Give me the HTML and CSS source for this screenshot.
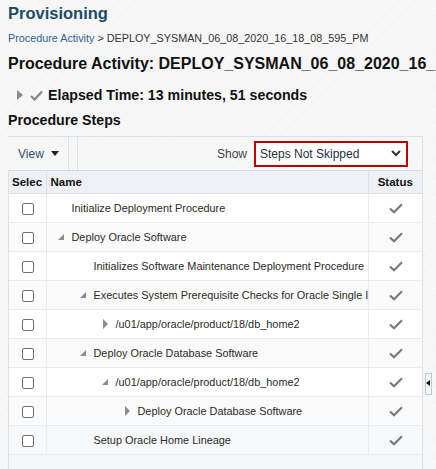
FILE: index.html
```html
<!DOCTYPE html>
<html>
<head>
<meta charset="utf-8">
<link rel="stylesheet" href="styles.css">
</head>
<body>
<div class="page">
  <h1 class="title">Provisioning</h1>
  <div class="crumbs"><a class="crumb-link">Procedure Activity</a> &gt; DEPLOY_SYSMAN_06_08_2020_16_18_08_595_PM</div>
  <h2 class="activity">Procedure Activity: DEPLOY_SYSMAN_06_08_2020_16_18_08_595_PM</h2>
  <div class="elapsed">
    <span class="tri-right big"></span>
    <svg class="elapsed-check" width="13" height="11" viewBox="0 0 13 11"><path d="M1 6 L4.5 9.5 L12 1.5" fill="none" stroke="#8a8a8a" stroke-width="2.4"/></svg>
    <span>Elapsed Time: 13 minutes, 51 seconds</span>
  </div>
  <h3 class="steps-title">Procedure Steps</h3>
  <div class="panel">
    <div class="toolbar">
      <div class="view">View <span class="caret"></span></div>
      <div class="sep"></div>
      <div class="sep second"></div>
      <div class="show">
        <span class="show-label">Show</span>
        <div class="select">Steps Not Skipped
          <svg class="chev" width="10" height="7" viewBox="0 0 10 7"><path d="M1 1 L5 5 L9 1" fill="none" stroke="#333" stroke-width="2"/></svg>
        </div>
      </div>
    </div>
    <div class="grid">
      <table class="steps">
        <colgroup><col class="c-sel"><col class="c-name"><col class="c-status"></colgroup>
        <thead>
          <tr><th class="th-sel">Selec</th><th class="th-name">Name</th><th class="th-status">Status</th></tr>
        </thead>
        <tbody>
          <tr><td class="sel"><span class="cb"></span></td><td class="name"><div class="nm l0"><span class="tw"></span>Initialize Deployment Procedure</div></td><td class="st"><svg class="ck" width="14" height="11" viewBox="0 0 14 11"><path d="M1 5.5 L5 9.3 L13 1.3" fill="none" stroke="#7a7a7a" stroke-width="2.2"/></svg></td></tr>
          <tr class="alt"><td class="sel"><span class="cb"></span></td><td class="name"><div class="nm l0"><span class="tw exp"></span>Deploy Oracle Software</div></td><td class="st"><svg class="ck" width="14" height="11" viewBox="0 0 14 11"><path d="M1 5.5 L5 9.3 L13 1.3" fill="none" stroke="#7a7a7a" stroke-width="2.2"/></svg></td></tr>
          <tr><td class="sel"><span class="cb"></span></td><td class="name"><div class="nm l1"><span class="tw"></span>Initializes Software Maintenance Deployment Procedure</div></td><td class="st"><svg class="ck" width="14" height="11" viewBox="0 0 14 11"><path d="M1 5.5 L5 9.3 L13 1.3" fill="none" stroke="#7a7a7a" stroke-width="2.2"/></svg></td></tr>
          <tr class="alt"><td class="sel"><span class="cb"></span></td><td class="name"><div class="nm l1"><span class="tw exp"></span>Executes System Prerequisite Checks for Oracle Single Instance Database</div></td><td class="st"><svg class="ck" width="14" height="11" viewBox="0 0 14 11"><path d="M1 5.5 L5 9.3 L13 1.3" fill="none" stroke="#7a7a7a" stroke-width="2.2"/></svg></td></tr>
          <tr><td class="sel"><span class="cb"></span></td><td class="name"><div class="nm l2"><span class="tw col"></span>/u01/app/oracle/product/18/db_home2</div></td><td class="st"><svg class="ck" width="14" height="11" viewBox="0 0 14 11"><path d="M1 5.5 L5 9.3 L13 1.3" fill="none" stroke="#7a7a7a" stroke-width="2.2"/></svg></td></tr>
          <tr class="alt"><td class="sel"><span class="cb"></span></td><td class="name"><div class="nm l1"><span class="tw exp"></span>Deploy Oracle Database Software</div></td><td class="st"><svg class="ck" width="14" height="11" viewBox="0 0 14 11"><path d="M1 5.5 L5 9.3 L13 1.3" fill="none" stroke="#7a7a7a" stroke-width="2.2"/></svg></td></tr>
          <tr><td class="sel"><span class="cb"></span></td><td class="name"><div class="nm l2"><span class="tw exp"></span>/u01/app/oracle/product/18/db_home2</div></td><td class="st"><svg class="ck" width="14" height="11" viewBox="0 0 14 11"><path d="M1 5.5 L5 9.3 L13 1.3" fill="none" stroke="#7a7a7a" stroke-width="2.2"/></svg></td></tr>
          <tr class="alt"><td class="sel"><span class="cb"></span></td><td class="name"><div class="nm l3"><span class="tw col"></span>Deploy Oracle Database Software</div></td><td class="st"><svg class="ck" width="14" height="11" viewBox="0 0 14 11"><path d="M1 5.5 L5 9.3 L13 1.3" fill="none" stroke="#7a7a7a" stroke-width="2.2"/></svg></td></tr>
          <tr class="alt2"><td class="sel"><span class="cb"></span></td><td class="name"><div class="nm l1"><span class="tw"></span>Setup Oracle Home Lineage</div></td><td class="st"><svg class="ck" width="14" height="11" viewBox="0 0 14 11"><path d="M1 5.5 L5 9.3 L13 1.3" fill="none" stroke="#7a7a7a" stroke-width="2.2"/></svg></td></tr>
        </tbody>
      </table>
    </div>
    <div class="splitter"><span class="handle"><span class="tri-left"></span></span></div>
  </div>
</div>
</body>
</html>
```
FILE: styles.css
```css
html, body {
  margin: 0;
  padding: 0;
  height: 100%;
  overflow: hidden;
}
body {
  font-family: "Liberation Sans", Arial, sans-serif;
  color: #333;
  background-color: #f6f6f6;
  background-image: repeating-linear-gradient(135deg, #f3f3f3 0px, #f3f3f3 1px, #f8f8f8 1px, #f8f8f8 3px);
}
.page {
  padding: 0 0 0 8px;
  white-space: nowrap;
  height: 469px;
  overflow: hidden;
}
.title {
  margin: 0;
  padding-top: 3px;
  font-size: 16.5px;
  font-weight: bold;
  color: #1d4a68;
  line-height: 20px;
  height: 22px;
}
.crumbs {
  margin-top: 6px;
  font-size: 10.8px;
  line-height: 14px;
  color: #333;
}
.crumb-link {
  color: #2f5f96;
}
.activity {
  margin: 9px 0 0 0;
  font-size: 16px;
  line-height: 20px;
  font-weight: bold;
  color: #111;
}
.elapsed {
  display: flex;
  align-items: center;
  margin-top: 12px;
  height: 18px;
  font-size: 14.2px;
  font-weight: bold;
  color: #111;
}
.tri-right.big {
  width: 0;
  height: 0;
  border-top: 5px solid transparent;
  border-bottom: 5px solid transparent;
  border-left: 6px solid #8a8a8a;
  margin-left: 9px;
  margin-right: 7px;
}
.elapsed-check {
  margin-right: 5px;
}
.steps-title {
  margin: 7px 0 0 0;
  font-size: 14.2px;
  line-height: 18px;
  font-weight: bold;
  color: #111;
}
.panel {
  position: relative;
  margin-top: 7px;
  width: 415px;
}
.toolbar {
  display: flex;
  align-items: center;
  height: 33px;
  border-top: 1px solid #dde3ea;
  font-size: 12px;
}
.view {
  display: flex;
  align-items: center;
  padding-left: 10px;
  width: 50px;
  color: #2e4d6b;
}
.caret {
  display: inline-block;
  width: 0;
  height: 0;
  border-left: 4px solid transparent;
  border-right: 4px solid transparent;
  border-top: 5px solid #222;
  margin-left: 7px;
}
.sep {
  align-self: stretch;
  width: 1px;
  background: #dde3ea;
}
.sep.second {
  margin-left: 8px;
}
.show {
  display: flex;
  align-items: center;
  margin-left: auto;
  margin-right: 15px;
}
.show-label {
  color: #444;
  margin-right: 7px;
}
.select {
  display: flex;
  align-items: center;
  justify-content: space-between;
  box-sizing: border-box;
  width: 154px;
  height: 26px;
  border: 2px solid #c00000;
  background: #fff;
  padding: 0 5px 0 4px;
  color: #1f2f44;
  font-size: 12px;
}
.grid {
  background: #f4f6f9;
  border-left: 1px solid #dbe1e8;
  border-right: 1px solid #dbe1e8;
  height: 300px;
  width: 413px;
}
.steps {
  border-collapse: collapse;
  table-layout: fixed;
  width: 413px;
  font-size: 10.9px;
}
.c-sel { width: 37px; }
.c-status { width: 54px; }
.steps th {
  height: 22px;
  padding: 0 4px;
  background: #edf1f5;
  border: 1px solid #dbe1e8;
  border-top-color: #d3dbe3;
  font-weight: bold;
  font-size: 11.5px;
  color: #111;
  text-align: left;
  overflow: hidden;
  white-space: nowrap;
  text-overflow: clip;
}
.steps th:first-child { border-left: none; padding-left: 3px; }
.steps th.th-status { border-right: none; text-align: center; padding: 0; }
.steps td {
  height: 28px;
  padding: 0;
  background: #fff;
  border: 1px solid #e8ecf0;
  overflow: hidden;
  white-space: nowrap;
}
.steps td:first-child { border-left: none; }
.steps td:last-child { border-right: none; }
.steps tr.alt td { background: #fafafa; }
.steps tr.alt2 td { background: #f7f8fa; }
.sel { text-align: center; }
.cb {
  display: inline-block;
  box-sizing: border-box;
  width: 12px;
  height: 12px;
  border: 1px solid #6f6f6f;
  border-radius: 2px;
  background: #fff;
  vertical-align: middle;
  margin-left: 2px;
}
.nm {
  display: flex;
  align-items: center;
  color: #2a2a2a;
  overflow: hidden;
}
.nm.l0 { padding-left: 11px; }
.nm.l1 { padding-left: 33px; }
.nm.l2 { padding-left: 55px; }
.nm.l3 { padding-left: 77px; }
.tw {
  display: inline-block;
  width: 14px;
  flex: none;
  position: relative;
  height: 10px;
}
.tw.exp::before {
  content: "";
  position: absolute;
  left: 0;
  top: 2px;
  width: 0;
  height: 0;
  border-left: 6px solid transparent;
  border-bottom: 6px solid #8c8c8c;
}
.tw.col::before {
  content: "";
  position: absolute;
  left: 1px;
  top: 0;
  width: 0;
  height: 0;
  border-top: 5px solid transparent;
  border-bottom: 5px solid transparent;
  border-left: 5px solid #8c8c8c;
}
.st { text-align: center; }
.ck { vertical-align: middle; margin-left: 1px; }
.splitter {
  position: absolute;
  left: 414px;
  top: 0;
  bottom: -400px;
  width: 1px;
  background: #dbe1e8;
}
.handle {
  position: absolute;
  left: 3px;
  top: 237px;
  width: 5px;
  height: 20px;
  border: 1px solid #b9c6d3;
  background: #f6f8fa;
}
.tri-left {
  position: absolute;
  left: 0;
  top: 6px;
  width: 0;
  height: 0;
  border-top: 3px solid transparent;
  border-bottom: 3px solid transparent;
  border-right: 4px solid #111;
}
```
